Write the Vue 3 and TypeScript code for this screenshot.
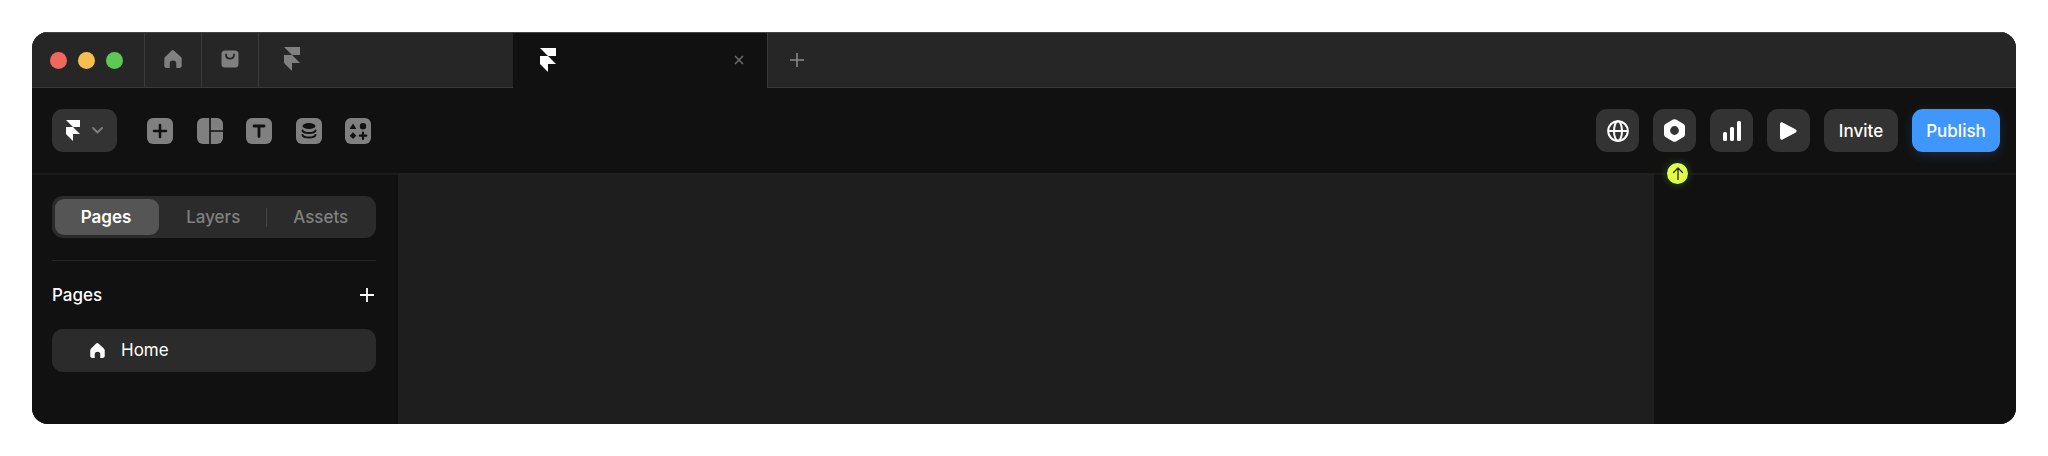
<script setup lang="ts">
const framerPath = 'M0 0h16v8H8L0 0Zm0 8h8l8 8H8v8L0 16V8Z'
const homePath = 'M7.2 1.2a1.2 1.2 0 0 1 1.6 0l5.4 4.9c.5.5.8 1.1.8 1.8v5.3c0 1-.8 1.8-1.8 1.8h-2.4v-3.3a2.6 2.6 0 0 0-5.2 0V15H3.2c-1 0-1.8-.8-1.8-1.8V7.900c0-.7.3-1.300.8-1.800Z'
</script>

<template>
  <div class="page">
    <div class="window">
      <header class="tabs">
        <div class="lights">
          <span class="light light--red"></span>
          <span class="light light--yellow"></span>
          <span class="light light--green"></span>
        </div>
        <div class="tab tab--icon">
          <svg class="lift" width="18" height="18" viewBox="1.400 0.900 13.600 14.100" fill="#808080"><path :d="homePath" /></svg>
        </div>
        <div class="tab tab--icon">
          <svg class="lift" width="18" height="18" viewBox="0 0 18 18">
            <rect x="0.500" y="0.500" width="17" height="17" rx="3.500" fill="#808080" />
            <path d="M5 4.500c0 5.500 8 5.500 8 0" fill="none" stroke="#262626" stroke-width="1.800" stroke-linecap="round" />
          </svg>
        </div>
        <div class="tab tab--project">
          <svg class="lift" width="16" height="24" viewBox="0 0 16 24" fill="#808080"><path :d="framerPath" /></svg>
        </div>
        <div class="tab tab--active">
          <svg class="lift" width="16" height="24" viewBox="0 0 16 24" fill="#fff"><path :d="framerPath" /></svg>
          <svg class="lift" width="10" height="10" viewBox="0 0 10 10"><path d="M1 1l8 8M9 1l-8 8" stroke="#6a6a6a" stroke-width="1.600" /></svg>
        </div>
        <button class="tab-add" type="button">
          <svg width="14" height="14" viewBox="0 0 14 14"><path d="M7 0v14M0 7h14" stroke="#8a8a8a" stroke-width="1.600" /></svg>
        </button>
      </header>

      <div class="toolbar">
        <button class="logo-btn" type="button">
          <svg width="14" height="21" viewBox="0 0 16 24" fill="#fff"><path :d="framerPath" /></svg>
          <svg width="11" height="7" viewBox="0 0 11 7"><path d="M1 1l4.500 4.500L10 1" fill="none" stroke="#808080" stroke-width="1.800" stroke-linecap="round" stroke-linejoin="round" /></svg>
        </button>
        <div class="tools">
          <svg width="26" height="26" viewBox="0 0 26 26">
            <rect width="26" height="26" rx="6" fill="#808080" />
            <path d="M13 7v12M7 13h12" stroke="#111" stroke-width="2.600" stroke-linecap="round" />
          </svg>
          <svg width="26" height="26" viewBox="0 0 26 26" fill="#808080">
            <path d="M6 0h6.200v26H6a6 6 0 0 1-6-6V6a6 6 0 0 1 6-6Z" />
            <path d="M13.800 0H20a6 6 0 0 1 6 6v6.200H13.800Z" />
            <path d="M13.800 13.800H26V20a6 6 0 0 1-6 6h-6.200Z" />
          </svg>
          <svg width="26" height="26" viewBox="0 0 26 26">
            <rect width="26" height="26" rx="6" fill="#808080" />
            <path d="M8 8h10M13 8v10.500" fill="none" stroke="#111" stroke-width="2.800" stroke-linecap="round" />
          </svg>
          <svg width="26" height="26" viewBox="0 0 26 26">
            <rect width="26" height="26" rx="6" fill="#808080" />
            <ellipse cx="13" cy="8" rx="6.500" ry="3" fill="#111" />
            <path d="M6.500 12.500c1 3.400 12 3.400 13 0M6.500 17c1 3.400 12 3.400 13 0" fill="none" stroke="#111" stroke-width="2" stroke-linecap="round" />
          </svg>
          <svg width="26" height="26" viewBox="0 0 26 26">
            <rect width="26" height="26" rx="6" fill="#808080" />
            <path d="M8 5.500l3.400 5.500H4.600Z" fill="#111" />
            <circle cx="18" cy="8.300" r="3.200" fill="#111" />
            <path d="M8 14.300l3.300 3.400L8 21l-3.300-3.300Z" fill="#111" />
            <path d="M18 14.500v6.500M14.800 17.700h6.500" stroke="#111" stroke-width="2.200" stroke-linecap="round" />
          </svg>
        </div>
        <div class="actions">
          <button class="square" type="button">
            <svg width="22" height="22" viewBox="0 0 22 22" fill="none" stroke="#fff" stroke-width="2">
              <circle cx="11" cy="11" r="9.800" />
              <ellipse cx="11" cy="11" rx="4" ry="9.800" />
              <path d="M2 11h18" />
            </svg>
          </button>
          <button class="square" type="button">
            <svg width="21" height="23" viewBox="0 0 21 23">
              <path fill-rule="evenodd" fill="#fff" d="M9 .6a3 3 0 0 1 3 0l7.500 4.300a3 3 0 0 1 1.500 2.600v8a3 3 0 0 1-1.500 2.600L12 22.400a3 3 0 0 1-3 0l-7.500-4.300A3 3 0 0 1 0 15.500v-8a3 3 0 0 1 1.500-2.600ZM10.500 7.100a4.400 4.400 0 1 0 0 8.800 4.400 4.400 0 0 0 0-8.800Z" />
            </svg>
          </button>
          <button class="square" type="button">
            <svg width="18" height="20" viewBox="0 0 18 20" fill="#fff">
              <rect x="0" y="11" width="4" height="9" rx="1.500" />
              <rect x="7" y="6" width="4" height="14" rx="1.500" />
              <rect x="14" y="0" width="4" height="20" rx="1.500" />
            </svg>
          </button>
          <button class="square" type="button">
            <svg width="17" height="18" viewBox="0 0 17 18" fill="#fff">
              <path d="M0 2a1.700 1.700 0 0 1 2.600-1.400l13.200 7a1.700 1.700 0 0 1 0 2.900L2.600 17.400A1.700 1.700 0 0 1 0 16Z" />
            </svg>
          </button>
          <button class="btn btn--invite" type="button">Invite</button>
          <button class="btn btn--primary" type="button">Publish</button>
          <span class="update-dot">
            <svg width="12" height="13" viewBox="0 0 12 13"><path d="M6 12.500V1M1.500 5.500 6 1l4.500 4.500" fill="none" stroke="#1c2a10" stroke-width="1.300" stroke-linecap="round" stroke-linejoin="round" /></svg>
          </span>
        </div>
      </div>

      <div class="body">
        <aside class="sidebar">
          <div class="segments">
            <span class="segment segment--on">Pages</span>
            <span class="segment segment--off">Layers</span>
            <span class="segment-rule"></span>
            <span class="segment segment--off">Assets</span>
          </div>
          <div class="sidebar__head">
            <span>Pages</span>
            <svg width="14" height="14" viewBox="0 0 14 14"><path d="M7 0v14M0 7h14" stroke="#fff" stroke-width="1.800" /></svg>
          </div>
          <div class="page-row">
            <svg width="15" height="15" viewBox="1.400 0.900 13.600 14.100" fill="#fff"><path :d="homePath" /></svg>
            <span>Home</span>
          </div>
        </aside>
        <main class="canvas"></main>
        <aside class="panel"></aside>
      </div>
    </div>
  </div>
</template>

<style>
html,
body {
  margin: 0;
  background: #fff;
}
</style>

<style scoped>
.page {
  height: 456px;
  padding: 32px;
  box-sizing: border-box;
  font-family: Inter, "Liberation Sans", sans-serif;
}

.window {
  position: relative;
  height: 392px;
  border-radius: 16px;
  overflow: hidden;
  background: #111;
  display: flex;
  flex-direction: column;
}

.tabs {
  height: 56px;
  flex: none;
  box-sizing: border-box;
  display: flex;
  background: #262626;
  border-top: 1px solid #444;
  border-bottom: 1px solid #3a3a3a;
}

.lift {
  margin-top: -2px;
}

.lights {
  width: 112px;
  padding-left: 18px;
  box-sizing: border-box;
  display: flex;
  align-items: center;
  gap: 11px;
}

.light {
  width: 17px;
  height: 17px;
  border-radius: 50%;
}

.light--red {
  background: #f1675d;
}

.light--yellow {
  background: #f6bd4f;
}

.light--green {
  background: #5fc854;
}

.tab {
  display: flex;
  align-items: center;
  border-left: 1px solid #3a3a3a;
  box-sizing: border-box;
}

.tab--icon {
  width: 57px;
  justify-content: center;
}

.tab--project {
  width: 255px;
  padding-left: 25px;
}

.tab--active {
  width: 254px;
  margin: 0 0 -1px;
  padding: 0 23px 0 27px;
  justify-content: space-between;
  background: #111;
  border-left: none;
}

.tab-add {
  width: 58px;
  padding: 0;
  border: none;
  border-left: 1px solid #3a3a3a;
  background: none;
  display: flex;
  align-items: center;
  justify-content: center;
}

.toolbar {
  height: 87px;
  flex: none;
  box-sizing: border-box;
  padding: 21px 16px 0 20px;
  display: flex;
  align-items: flex-start;
  border-bottom: 2px solid #1b1b1b;
}

.logo-btn {
  width: 65px;
  height: 43px;
  padding: 0;
  border: none;
  border-radius: 11px;
  background: #333;
  display: flex;
  align-items: center;
  justify-content: center;
  gap: 12px;
}

.tools {
  height: 43px;
  margin-left: 30px;
  display: flex;
  align-items: center;
  gap: 23.500px;
}

.actions {
  margin-left: auto;
  display: flex;
  gap: 14px;
  position: relative;
}

.square {
  width: 43px;
  height: 43px;
  padding: 0;
  border: none;
  border-radius: 11px;
  background: #333;
  display: flex;
  align-items: center;
  justify-content: center;
}

.btn {
  width: 88px;
  height: 43px;
  padding: 0;
  border: none;
  border-radius: 11px;
  background: #333;
  color: #fff;
  font: 500 17px Inter, "Liberation Sans", sans-serif;
}

.btn--invite {
  width: 74px;
}

.btn--primary {
  background: #4097fb;
  box-shadow: 0 3px 12px rgba(64, 151, 251, 0.2);
}

.update-dot {
  position: absolute;
  left: 71px;
  top: 54px;
  width: 21px;
  height: 21px;
  border-radius: 50%;
  background: #e3ff47;
  box-shadow: 0 0 0 2px #0f2a24, 0 0 8px rgba(220, 255, 62, 0.25);
  display: flex;
  align-items: center;
  justify-content: center;
}

.body {
  flex: 1;
  display: flex;
  min-height: 0;
}

.sidebar {
  width: 366px;
  flex: none;
  box-sizing: border-box;
  padding: 21px 22px 0 20px;
  background: #111;
}

.segments {
  height: 42px;
  box-sizing: border-box;
  padding: 3px;
  border-radius: 11px;
  background: #2b2b2b;
  display: flex;
  align-items: center;
  font-size: 17px;
  font-weight: 500;
  color: #808080;
}

.segment {
  flex: 1;
  text-align: center;
}

.segment--off {
  padding-left: 2px;
}

.segment--on {
  flex: none;
  width: 104px;
  height: 36px;
  line-height: 36px;
  padding-right: 2px;
  box-sizing: border-box;
  border-radius: 9px;
  background: #555;
  color: #fff;
  font-weight: 600;
}

.segment-rule {
  width: 1px;
  height: 19px;
  background: #444;
}

.sidebar__head {
  margin-top: 22px;
  padding: 22px 2px 0 0;
  border-top: 1px solid #262626;
  display: flex;
  align-items: center;
  justify-content: space-between;
  color: #fff;
  font-size: 17px;
  font-weight: 500;
  line-height: 24px;
}

.page-row {
  margin-top: 22px;
  height: 43px;
  padding: 0 0 1px 38px;
  box-sizing: border-box;
  border-radius: 11px;
  background: #2b2b2b;
  display: flex;
  align-items: center;
  gap: 16px;
  color: #fff;
  font-size: 17px;
}

.canvas {
  width: 1256px;
  flex: none;
  margin-top: -2px;
  background: #1e1e1e;
}

.panel {
  flex: 1;
  background: #111;
}
</style>
